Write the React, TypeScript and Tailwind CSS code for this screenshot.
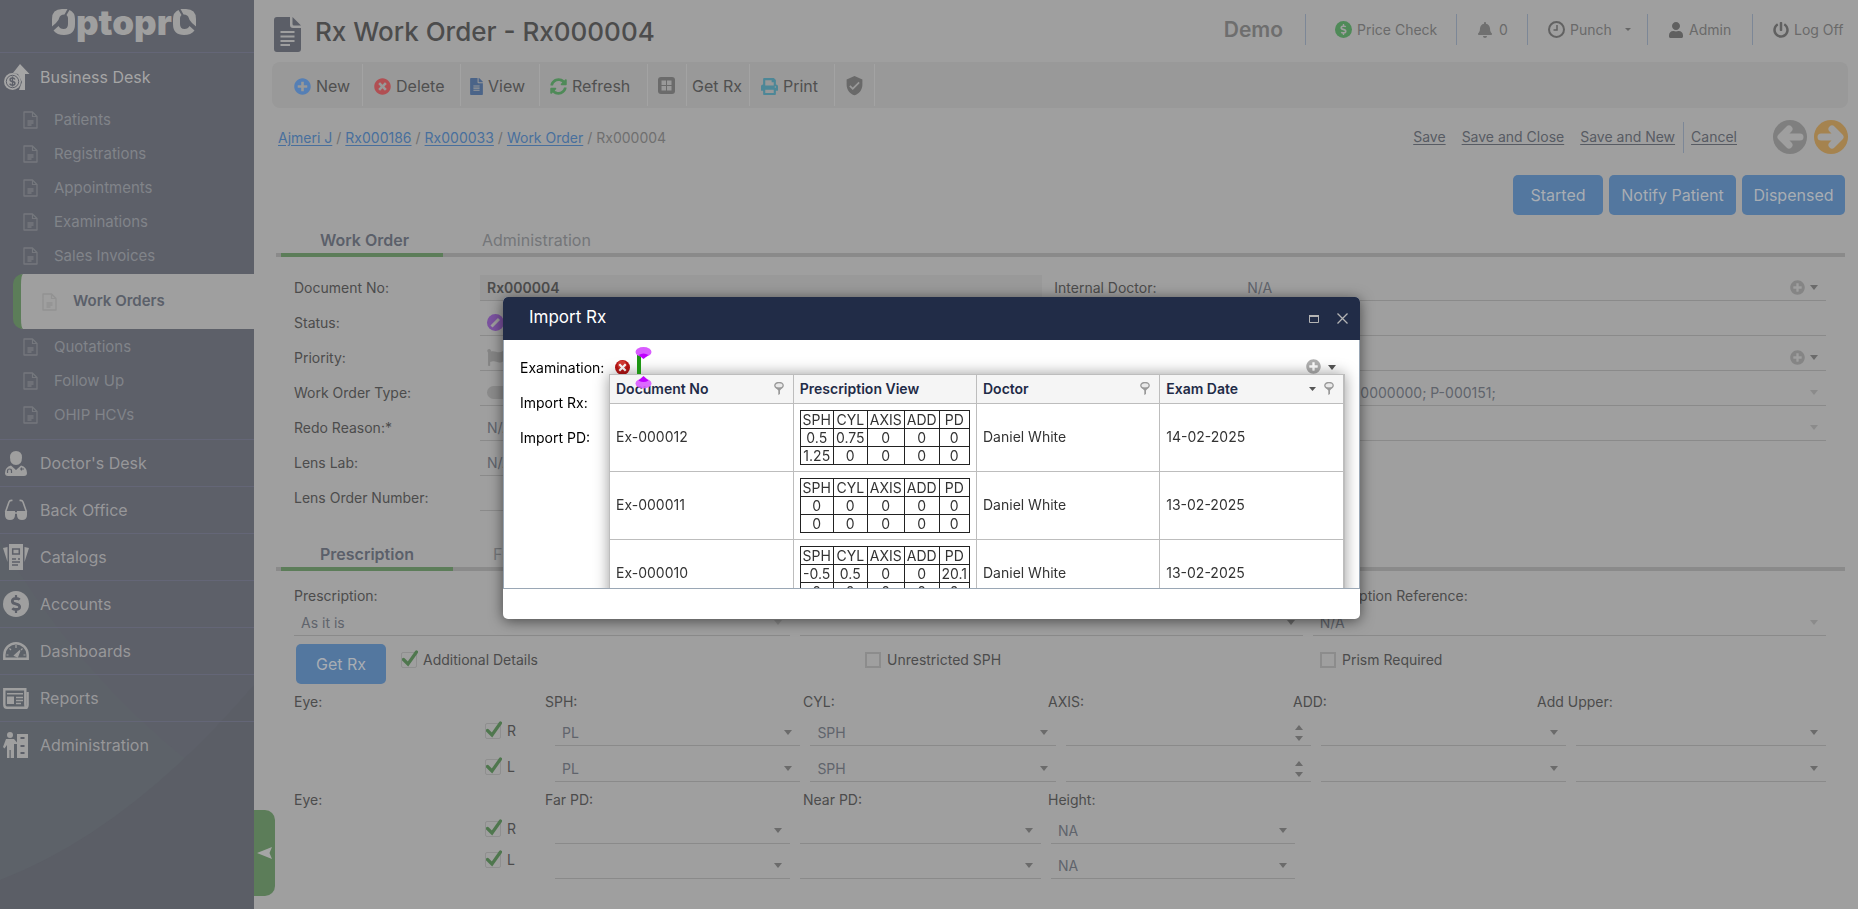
import React, { useId } from "react";
import {
  FaBell,
  FaDollarSign,
  FaFileAlt,
  FaFlag,
  FaPlusCircle,
  FaPowerOff,
  FaPrint,
  FaSyncAlt,
  FaTimesCircle,
  FaUser,
} from "react-icons/fa";
import { MdVerifiedUser } from "react-icons/md";

/* ---------- drawings ---------- */

function LogoRing({ flip }: { flip?: boolean }) {
  return (
    <svg width="23" height="26" viewBox="0 0 23 26" className={flip ? "-scale-x-100" : ""} fill="currentColor" aria-hidden="true">
      <path d="M0 17.500V10Q0 0 10 0H15.500L12.500 5.500Q8 5.500 7.200 9Q7 11 4 14z" />
      <path d="M17.500 1Q23 3.500 23 10V15Q23 26 12 26Q5 26 1.500 21.500L6.500 17Q8 20 11.500 20Q16 20 16 15V9Q16 7.500 14.500 6z" />
    </svg>
  );
}

function Logo() {
  return (
    <div className="flex items-center gap-px text-[#9f9f9f]" aria-label="Optopro">
      <LogoRing />
      <span className="text-[35px] leading-9 font-black">ptopr</span>
      <LogoRing flip />
    </div>
  );
}

function Caret({ className = "text-[#5f5f5f]" }: { className?: string }) {
  return (
    <svg width="8" height="5" viewBox="0 0 8 5" className={`shrink-0 ${className}`} aria-hidden="true">
      <path d="M0 0h8L4 5z" fill="currentColor" />
    </svg>
  );
}

function DocIcon() {
  return (
    <svg width="15" height="18" viewBox="0 0 15 18" fill="none" stroke="currentColor" aria-hidden="true">
      <path d="M1 1h8.500L14 5.500V17H1z" strokeWidth="1.300" strokeLinejoin="round" />
      <path d="M9.500 1v4.500H14" strokeWidth="1.200" />
      <path d="M4.500 10h6M4.500 12h6M4.500 14h4" strokeWidth="1.300" />
    </svg>
  );
}

function GrowthIcon() {
  return (
    <svg width="26" height="26" viewBox="0 0 26 26" aria-hidden="true">
      <path d="M16 0l9.500 10H21v16h-6l3-8-4-8-5-1z" fill="currentColor" />
      <circle cx="8.500" cy="17.500" r="8.500" fill="currentColor" />
      <circle cx="8.500" cy="17.500" r="6.200" fill="none" stroke="#5d6069" strokeWidth="1" />
      <path d="M11 15.500c-.5-1-1.300-1.500-2.500-1.500-3.200 0-3.200 3.200 0 3.500 3.200.3 3.200 3.700 0 3.700-1.300 0-2.300-.5-2.800-1.600M8.500 12.500v10" fill="none" stroke="#5d6069" strokeWidth="1.400" />
    </svg>
  );
}

function DoctorIcon() {
  return (
    <svg width="22" height="25" viewBox="0 0 22 25" fill="currentColor" aria-hidden="true">
      <path d="M11 0Q17 0 17 6.500Q17 14 11 14Q5 14 5 6.500Q5 0 11 0z" />
      <path d="M6 14.500L11 19L16 14.500Q22 16 22 22Q22 25 19 25H3Q0 25 0 22Q0 16 6 14.500z" />
      <path d="M2.500 22V20q0-2 2-2t2 2v2M16.500 16.500v3M15 18h4" fill="none" stroke="#5d6069" strokeWidth="1.200" />
    </svg>
  );
}

function GlassesIcon() {
  return (
    <svg width="24" height="22" viewBox="0 0 24 22" fill="none" stroke="currentColor" aria-hidden="true">
      <path d="M1.500 13L5 3q.8-2 3.500-1.500M22.500 13L19 3q-.8-2-3.500-1.500" strokeWidth="1.600" />
      <path d="M1 12h10v4q0 5-5 5t-5-5zM13 12h10v4q0 5-5 5t-5-5z" fill="currentColor" stroke="none" />
      <path d="M10 14h4" strokeWidth="1.500" />
    </svg>
  );
}

function CatalogIcon() {
  return (
    <svg width="26" height="26" viewBox="0 0 26 26" fill="currentColor" aria-hidden="true">
      <path d="M0 4l4.500-1V18zM26 4l-4.500-1V18z" />
      <path d="M6 0h14v26H6z" />
      <path d="M9.700 5h6.600v5H9.700zM9 15h4M9 18h8M9 21h6M15 15h2" fill="none" stroke="#5d6069" strokeWidth="1.500" />
    </svg>
  );
}

function CoinIcon() {
  return (
    <span className="flex h-[26px] w-[26px] items-center justify-center rounded-full bg-[#9f9f9f] text-[#5d6069]">
      <FaDollarSign size={18} />
    </span>
  );
}

function GaugeIcon() {
  return (
    <svg width="26" height="18" viewBox="0 0 26 18" fill="none" stroke="currentColor" aria-hidden="true">
      <path d="M1.300 16.700V13a11.700 11.700 0 0 1 23.400 0v3.700z" strokeWidth="2.500" />
      <path d="M13 3v3M6.500 6.500l1.500 1.500M19.500 6.500L18 8M3.500 13h2M22.500 13h-2" strokeWidth="1.200" />
      <path d="M11.500 13.500L17 8.500l-2.500 6.500z" fill="currentColor" strokeWidth="1.200" />
    </svg>
  );
}

function ReportIcon() {
  return (
    <svg width="26" height="21" viewBox="0 0 26 21" fill="none" stroke="currentColor" aria-hidden="true">
      <path d="M1.300 1.300h21v15q0 3.400 2 3.400H4q-2.700 0-2.700-3z" strokeWidth="2.400" />
      <path d="M24.600 4v13q0 2-1 2.700" strokeWidth="2.400" />
      <path d="M4 5.700h16M13 9.500h7M13 12.500h7M13 15.500h5" strokeWidth="1.600" />
      <path d="M4 8.500h7V16H4z" fill="currentColor" stroke="none" />
    </svg>
  );
}

function AdminIcon() {
  return (
    <svg width="26" height="26" viewBox="0 0 26 26" fill="currentColor" aria-hidden="true">
      <circle cx="7" cy="3" r="3" />
      <path d="M3 7h8l3 3.500V12h-3v14H7.700v-8H6.500v8H4V13l-2.500 3.500L0 15z" />
      <path d="M14 2h11v24H14z" />
      <path d="M17.500 6h4M17.500 14h4M17.500 21h4" stroke="#5d6069" strokeWidth="1.800" />
    </svg>
  );
}

function PinIcon() {
  return (
    <svg width="10" height="13" viewBox="0 0 10 13" aria-hidden="true" className="shrink-0">
      <ellipse cx="5" cy="3.500" rx="4.200" ry="3" fill="#e9e9e9" stroke="#999" strokeWidth="1.300" />
      <path d="M1.500 5.500h7L6 8.500V12L4.300 13V8.500z" fill="#999" />
    </svg>
  );
}

/* ---------- form controls ---------- */

type FieldProps = {
  id?: string;
  label: string;
  value?: string;
  faint?: boolean;
  add?: boolean;
};

function SelectField({ id, label, value = "", faint, add }: FieldProps) {
  return (
    <div className="relative flex h-[26px] min-w-0 items-center border-b border-[#8a8a8a]">
      <select id={id} aria-label={label} defaultValue={value} className="h-full w-full appearance-none bg-transparent pl-[7px] text-[#60646c] outline-none">
        <option value={value}>{value}</option>
      </select>
      <div className="pointer-events-none absolute right-[8px] flex items-center gap-[5px]">
        {add && <FaPlusCircle size={15} className="text-[#858585]" />}
        <Caret className={faint ? "text-[#8b8b8b]" : "text-[#6b6b6b]"} />
      </div>
    </div>
  );
}

function NumberField({ label }: { label: string }) {
  return (
    <div className="relative flex h-[26px] min-w-0 items-center border-b border-[#8a8a8a]">
      <input aria-label={label} className="h-full w-full bg-transparent pl-[7px] outline-none" />
      <div className="pointer-events-none absolute right-[8px] flex flex-col gap-[6px] text-[#6b6b6b]">
        <Caret className="rotate-180" />
        <Caret className="" />
      </div>
    </div>
  );
}

function Check({ label, checked, className = "" }: { label: string; checked?: boolean; className?: string }) {
  return (
    <label className={`flex items-center gap-[6px] text-[#4c4c4c] ${className}`}>
      <span className="relative flex h-4 w-4 shrink-0">
        <input
          type="checkbox"
          defaultChecked={checked}
          className="peer h-4 w-4 appearance-none border-2 border-[#8c8c8c] checked:rounded-xs checked:border checked:border-[#8f8f8f]"
        />
        <svg viewBox="0 0 16 17" className="pointer-events-none absolute -top-[2px] left-px hidden h-[17px] w-4 peer-checked:block" fill="none" stroke="#4f774e" strokeWidth="3.200" aria-hidden="true">
          <path d="M1.500 9.500l4.500 4.500L14.500 2" strokeLinecap="round" />
        </svg>
      </span>
      {label}
    </label>
  );
}

function Tabs({ items, width, gap }: { items: string[]; width: string; gap: string }) {
  return (
    <div role="tablist" className="mx-[22px] mr-[13px] flex h-[30px] border-b-4 border-[#8a8a8a] pl-[5px]">
      <button role="tab" aria-selected="true" className={`-mb-1 h-[30px] border-b-4 border-[#5c7d59] pl-[39px] text-left text-base leading-[25px] font-semibold whitespace-nowrap text-[#5b606a] ${width}`}>
        {items[0]}
      </button>
      <button role="tab" aria-selected="false" className={`text-base leading-[25px] text-[#747679] ${gap}`}>
        {items[1]}
      </button>
    </div>
  );
}

/* ---------- sidebar ---------- */

const subItems = ["Patients", "Registrations", "Appointments", "Examinations", "Sales Invoices"];
const subItemsAfter = ["Quotations", "Follow Up", "OHIP HCVs"];
const sections = [
  { name: "Doctor's Desk", icon: <DoctorIcon /> },
  { name: "Back Office", icon: <GlassesIcon /> },
  { name: "Catalogs", icon: <CatalogIcon /> },
  { name: "Accounts", icon: <CoinIcon /> },
  { name: "Dashboards", icon: <GaugeIcon /> },
  { name: "Reports", icon: <ReportIcon /> },
  { name: "Administration", icon: <AdminIcon /> },
];

function SubItem({ name }: { name: string }) {
  return (
    <a href="#" className="flex h-[34px] items-center gap-4 pl-[23px] text-[15px] text-[#818489]">
      <span className="text-[#75777d]">
        <DocIcon />
      </span>
      {name}
    </a>
  );
}

function Sidebar() {
  return (
    <aside className="relative w-[254px] shrink-0 bg-[#5d6069]">
      <svg className="absolute inset-x-0 bottom-0 h-[369px] w-full" viewBox="0 0 254 369" preserveAspectRatio="none" aria-hidden="true">
        <path d="M0 0Q90 160 254 270V369H0z" fill="#5d6269" />
        <path d="M0 340Q130 290 254 145V369H0z" fill="#5b5e66" />
      </svg>
      <div className="relative">
        <div className="flex h-[52px] items-start pt-[4px] pl-[52px]">
          <Logo />
        </div>
        <nav>
          <a href="#" className="flex h-12 items-center border-t border-[#646677] pl-1 text-base text-[#a5a5a5]">
            <span className="w-9">
              <GrowthIcon />
            </span>
            Business Desk
          </a>
          <div className="pt-[3px] pb-[7px]">
            {subItems.map((n) => (
              <SubItem key={n} name={n} />
            ))}
            <a href="#" aria-current="page" className="my-px ml-[13px] flex h-[55px] items-center gap-4 rounded-l-[10px] border-l-8 border-[#5c7d59] bg-[#9f9f9f] pl-[21px] text-[15px] font-semibold text-[#5b606a]">
              <span className="text-[#929292]">
                <DocIcon />
              </span>
              Work Orders
            </a>
            {subItemsAfter.map((n) => (
              <SubItem key={n} name={n} />
            ))}
          </div>
          {sections.map((s) => (
            <a key={s.name} href="#" className="flex h-[47px] items-center border-t border-[#646677] pl-[3px] text-base text-[#979799]">
              <span className="flex w-[26px] justify-center text-[#9f9f9f]">{s.icon}</span>
              <span className="pl-[11px]">{s.name}</span>
            </a>
          ))}
        </nav>
      </div>
      <button aria-label="Collapse menu" className="absolute bottom-[13px] left-full flex h-[86px] w-[21px] items-center justify-center rounded-r-[10px] bg-[#5c7d59]">
        <svg width="15" height="12" viewBox="0 0 15 12" aria-hidden="true">
          <path d="M0 6L15 0L12.500 6L15 12z" fill="#a5a5a5" />
        </svg>
      </button>
    </aside>
  );
}

/* ---------- page header ---------- */

function TopBar() {
  return (
    <header className="flex h-[62px] items-start">
      <div className="flex flex-1 items-center gap-[14px] pt-4 pl-5">
        <svg width="27" height="35" viewBox="0 0 27 35" aria-hidden="true">
          <path d="M3 0h13v8q0 3 3 3h8v21q0 3-3 3H3q-3 0-3-3V3q0-3 3-3z" fill="#5b5e67" />
          <path d="M18.500 0L27 8.500h-7q-1.500 0-1.500-1.500z" fill="#5b5e67" />
          <path d="M6.500 15h14M6.500 19.500h14M6.500 24h14M6.500 28h9.500" stroke="#9f9f9f" strokeWidth="2" />
        </svg>
        <h1 className="pb-1 text-[26px] leading-8 font-medium whitespace-nowrap text-[#4c4c4c]">Rx Work Order - Rx000004</h1>
      </div>
      <div className="flex items-center pt-[14px] text-sm whitespace-nowrap text-[#6a6a6a]">
        <span className="pr-[22px] text-[21px] leading-[31px] font-semibold text-[#6e6e6e]">Demo</span>
        <a href="#" className="flex h-[31px] w-[151px] items-center gap-[5px] border-l border-[#7c8797] pl-[29px]">
          <span className="flex h-[17px] w-[17px] items-center justify-center rounded-full bg-[#4f8a58] text-[#9f9f9f]">
            <FaDollarSign size={11} />
          </span>
          Price Check
        </a>
        <a href="#" className="flex h-[31px] w-[71px] items-center gap-[6px] border-l border-[#7c8797] pl-5">
          <FaBell size={16} className="text-[#707070]" />0
        </a>
        <a href="#" className="flex h-[31px] w-[120px] items-center gap-[5px] border-l border-[#7c8797] pl-5">
          <svg width="17" height="17" viewBox="0 0 17 17" fill="none" stroke="#626262" strokeWidth="2" aria-hidden="true">
            <circle cx="8.500" cy="8.500" r="7.500" />
            <path d="M9 4v5H5.500" strokeWidth="1.500" />
          </svg>
          Punch
          <svg width="6" height="3" viewBox="0 0 6 3" className="ml-2" aria-hidden="true">
            <path d="M0 0h6L3 3z" fill="#666" />
          </svg>
        </a>
        <a href="#" className="flex h-[31px] w-[105px] items-center gap-[5px] border-l border-[#7c8797] pl-5">
          <FaUser size={16} className="text-[#606060]" />
          Admin
        </a>
        <a href="#" className="flex h-[31px] w-[106px] items-center gap-[5px] border-l border-[#7c8797] pl-5">
          <FaPowerOff size={16} className="text-[#606060]" />
          Log Off
        </a>
      </div>
    </header>
  );
}

function Tool({ icon, label, width, pad = "pl-3" }: { icon?: React.ReactNode; label?: string; width: string; pad?: string }) {
  return (
    <button className={`flex h-[42px] items-center gap-[5px] border-r border-[#a3a3a3] pt-[2px] whitespace-nowrap ${pad} ${width}`} aria-label={label || "Tool"}>
      {icon}
      {label}
    </button>
  );
}

function Toolbar() {
  return (
    <div role="toolbar" className="mr-[10px] ml-[18px] flex h-[46px] items-center rounded-lg bg-[#999] pl-[10px] text-base text-[#505050]">
      <Tool width="w-[81px]" icon={<FaPlusCircle size={17} className="text-[#557fb5]" />} label="New" />
      <Tool width="w-[98px]" pad="pl-[11px]" icon={<FaTimesCircle size={17} className="text-[#b14f53]" />} label="Delete" />
      <Tool width="w-[79px]" pad="pl-[9px]" icon={<FaFileAlt size={17} className="w-[13px] text-[#4b6488]" />} label="View" />
      <Tool width="w-[108px]" pad="pl-[10px]" icon={<FaSyncAlt size={17} className="text-[#4f8a58]" />} label="Refresh" />
      <button aria-label="Layout" className="flex h-[42px] w-[39px] items-center border-r border-[#a3a3a3] pl-[10px]">
        <svg width="17" height="17" viewBox="0 0 17 17" aria-hidden="true">
          <rect width="17" height="17" rx="3" fill="#6b6b6b" />
          <path d="M3.500 3.500h4.500v4.500H3.500zM9 3.500h4.500v4.500H9zM3.500 9h4.500v4.500H3.500zM9 9h4.500v4.500H9z" fill="#999" />
        </svg>
      </button>
      <Tool width="w-[63px]" pad="pl-[5px]" label="Get Rx" />
      <Tool width="w-[85px]" pad="pl-[11px]" icon={<FaPrint size={17} className="text-[#4d8797]" />} label="Print" />
      <button aria-label="Verify" className="flex h-[42px] w-10 items-center border-r border-[#a3a3a3] pl-[9px]">
        <MdVerifiedUser size={21} className="text-[#696969]" />
      </button>
    </div>
  );
}

function RoundArrow({ color, flip, label }: { color: string; flip?: boolean; label: string }) {
  return (
    <button aria-label={label}>
      <svg width="34" height="34" viewBox="0 0 34 34" className={flip ? "rotate-180" : ""} aria-hidden="true">
        <circle cx="17" cy="17" r="17" className={color} />
        <path d="M8 17L16 9M8 17L16 25M9 17H27" fill="none" stroke="#9f9f9f" strokeWidth="7" strokeLinecap="round" strokeLinejoin="round" />
      </svg>
    </button>
  );
}

function Crumbs() {
  const links = ["Ajmeri J", "Rx000186", "Rx000033", "Work Order"];
  return (
    <div className="flex items-start pt-3 pr-[10px] pl-6 text-sm">
      <nav aria-label="Breadcrumb" className="flex flex-1 gap-1 pt-2 whitespace-nowrap text-[#6f6f6f]">
        {links.map((l) => (
          <React.Fragment key={l}>
            <a href="#" className="text-[#486f9d] underline underline-offset-2">
              {l}
            </a>
            <span>/</span>
          </React.Fragment>
        ))}
        <span>Rx000004</span>
      </nav>
      <div className="flex h-[34px] items-center whitespace-nowrap text-[#575b63]">
        <a href="#" className="underline underline-offset-2">Save</a>
        <a href="#" className="ml-4 underline underline-offset-2">Save and Close</a>
        <a href="#" className="ml-4 underline underline-offset-2">Save and New</a>
        <a href="#" className="ml-2 flex h-[31px] items-center border-l border-[#7c8797] pl-[7px] underline underline-offset-2">Cancel</a>
        <div className="ml-9 flex gap-[7px]">
          <RoundArrow color="fill-[#7f7f7f]" label="Previous" />
          <RoundArrow color="fill-[#a5834f]" flip label="Next" />
        </div>
      </div>
    </div>
  );
}

/* ---------- page body ---------- */

function Label({ htmlFor, children }: { htmlFor?: string; children: React.ReactNode }) {
  return (
    <label htmlFor={htmlFor} className="block leading-[26px] whitespace-nowrap text-[#4c4c4c]">
      {children}
    </label>
  );
}

function LinedInput({ id, value, icon, strong }: { id: string; value: string; icon?: React.ReactNode; strong?: boolean }) {
  return (
    <div className={`flex h-[26px] items-center border-b border-[#8a8a8a] pl-[7px] ${strong ? "bg-[#999]" : ""}`}>
      {icon}
      <input id={id} defaultValue={value} className={`w-full bg-transparent outline-none ${strong ? "font-semibold text-[#4c4c4c]" : "text-[#60646c]"}`} />
    </div>
  );
}

function OrderForm() {
  const u = useId();
  const id = (n: string) => `${u}-${n}`;
  return (
    <div className="mr-8 ml-10 grid auto-rows-[35px] grid-cols-[186px_minmax(0,24fr)_12px_186px_minmax(0,25fr)] items-end pt-[9px] text-sm">
      <Label htmlFor={id("doc")}>Document No:</Label>
      <LinedInput id={id("doc")} value="Rx000004" strong />
      <span />
      <Label htmlFor={id("internal")}>Internal Doctor:</Label>
      <SelectField id={id("internal")} label="Internal Doctor" value="N/A" add />

      <Label htmlFor={id("status")}>Status:</Label>
      <LinedInput
        id={id("status")}
        value=""
        icon={
          <svg width="17" height="17" viewBox="0 0 17 17" className="shrink-0" aria-hidden="true">
            <circle cx="8.500" cy="8.500" r="8.500" fill="#7b52a0" />
            <path d="M4.500 12.500L12 5" stroke="#9f9f9f" strokeWidth="3" />
          </svg>
        }
      />
      <span />
      <Label htmlFor={id("external")}>External Doctor:</Label>
      <LinedInput id={id("external")} value="" />

      <Label htmlFor={id("priority")}>Priority:</Label>
      <LinedInput id={id("priority")} value="" icon={<FaFlag size={17} className="shrink-0 text-[#858585]" />} />
      <span />
      <Label htmlFor={id("patient")}>Patient:</Label>
      <SelectField id={id("patient")} label="Patient" add />

      <Label htmlFor={id("type")}>Work Order Type:</Label>
      <LinedInput id={id("type")} value="" icon={<span className="h-[13px] w-6 shrink-0 rounded-full bg-[#8b8b8b]" />} />
      <span />
      <Label htmlFor={id("contact")}>Contact:</Label>
      <SelectField id={id("contact")} label="Contact" value="Ajmeri J; 000-000000000; P-000151;" faint />

      <Label htmlFor={id("redo")}>Redo Reason:*</Label>
      <LinedInput id={id("redo")} value="N/A" />
      <span />
      <Label htmlFor={id("invoice")}>Invoice:</Label>
      <SelectField id={id("invoice")} label="Invoice" faint />

      <Label htmlFor={id("lab")}>Lens Lab:</Label>
      <LinedInput id={id("lab")} value="N/A" />
      <span className="col-span-3" />

      <Label htmlFor={id("lens")}>Lens Order Number:</Label>
      <LinedInput id={id("lens")} value="" />
      <span className="col-span-3" />
    </div>
  );
}

function EyeGroup({ checkGap, cols, children }: { checkGap: string; cols: string; children: React.ReactNode }) {
  return (
    <div className="flex items-start">
      <div className={`flex w-[261px] shrink-0 flex-col pl-[191px] ${checkGap}`}>
        <Check label="R" checked className="h-[22px]" />
        <Check label="L" checked className="h-[22px]" />
      </div>
      <div className={`grid flex-1 gap-x-[10px] ${cols}`}>{children}</div>
    </div>
  );
}

const eyes = ["R", "L"];

function PrescriptionForm() {
  const u = useId();
  return (
    <div className="mr-8 ml-10 pt-[15px] text-sm text-[#4c4c4c]">
      <div className="grid grid-cols-[496fr_502fr_513fr] gap-[10px]">
        <div>
          <label htmlFor={`${u}-a`} className="block h-6">Prescription:</label>
          <SelectField id={`${u}-a`} label="Prescription" value="As it is" faint />
        </div>
        <div>
          <label htmlFor={`${u}-b`} className="block h-6">Prescription View:</label>
          <SelectField id={`${u}-b`} label="Prescription View" />
        </div>
        <div>
          <label htmlFor={`${u}-c`} className="block h-6">Prescription Reference:</label>
          <SelectField id={`${u}-c`} label="Prescription Reference" value="N/A" faint />
        </div>
      </div>
      <div className="grid grid-cols-[571fr_455fr_506fr] pt-2">
        <div className="flex gap-[15px] pl-[2px]">
          <button className="h-10 w-[90px] rounded-[5px] bg-[#53779f] text-base text-[#a8adb3]">Get Rx</button>
          <Check label="Additional Details" checked className="h-8" />
        </div>
        <Check label="Unrestricted SPH" className="h-8" />
        <Check label="Prism Required" className="h-8" />
      </div>

      <div className="grid h-9 grid-cols-[251px_258fr_245fr_245fr_244fr_289fr] items-center">
        <span>Eye:</span>
        <span>SPH:</span>
        <span>CYL:</span>
        <span>AXIS:</span>
        <span>ADD:</span>
        <span>Add Upper:</span>
      </div>
      <EyeGroup checkGap="gap-[14px]" cols="gap-y-[10px] grid-cols-[245fr_245fr_245fr_244fr_250fr]">
        {eyes.map((eye) => (
          <React.Fragment key={eye}>
            <SelectField label={`SPH ${eye}`} value="PL" />
            <SelectField label={`CYL ${eye}`} value="SPH" />
            <NumberField label={`AXIS ${eye}`} />
            <SelectField label={`ADD ${eye}`} />
            <SelectField label={`Add Upper ${eye}`} />
          </React.Fragment>
        ))}
      </EyeGroup>
      <div className="grid h-9 grid-cols-[251px_258fr_245fr_778fr] items-center">
        <span>Eye:</span>
        <span>Far PD:</span>
        <span>Near PD:</span>
        <span>Height:</span>
      </div>
      <EyeGroup checkGap="gap-[9px]" cols="gap-y-[9px] grid-cols-[235fr_241fr_244fr_521fr]">
        {eyes.map((eye) => (
          <React.Fragment key={eye}>
            <SelectField label={`Far PD ${eye}`} />
            <SelectField label={`Near PD ${eye}`} />
            <SelectField label={`Height ${eye}`} value="NA" />
            <span />
          </React.Fragment>
        ))}
      </EyeGroup>
    </div>
  );
}

/* ---------- import dialog ---------- */

const exams = [
  { no: "Ex-000012", date: "14-02-2025", rx: [["0.5", "0.75", "0", "0", "0"], ["1.25", "0", "0", "0", "0"]] },
  { no: "Ex-000011", date: "13-02-2025", rx: [["0", "0", "0", "0", "0"], ["0", "0", "0", "0", "0"]] },
  { no: "Ex-000010", date: "13-02-2025", rx: [["-0.5", "0.5", "0", "0", "20.1"], ["0", "0", "0", "0", "0"]] },
];

function RxTable({ rows }: { rows: string[][] }) {
  return (
    <table className="w-[169px] table-fixed border-collapse text-center leading-[17px]">
      <colgroup>
        <col className="w-[33px]" />
        <col className="w-[34px]" />
        <col className="w-[37px]" />
        <col className="w-[35px]" />
        <col className="w-[30px]" />
      </colgroup>
      <tbody>
        {[["SPH", "CYL", "AXIS", "ADD", "PD"], ...rows].map((r, i) => (
          <tr key={i} className="h-[18px]">
            {r.map((c, j) => (
              <td key={j} className="border border-[#222] p-0">
                <span className="-mx-1 block">{c}</span>
              </td>
            ))}
          </tr>
        ))}
      </tbody>
    </table>
  );
}

function ImportDialog() {
  const heads = ["Document No", "Prescription View", "Doctor", "Exam Date"];
  return (
    <div className="fixed inset-0 flex items-center justify-center pt-[7px] pl-[5px]">
      <section role="dialog" aria-label="Import Rx" className="w-[857px] overflow-hidden rounded-[5px] bg-white shadow-[0_2px_14px_rgba(0,0,0,0.55)]">
        <div className="flex h-[43px] items-center bg-[#212c47] pr-3 pl-[26px] text-white">
          <h2 className="flex-1 pb-1 text-[17px] leading-6">Import Rx</h2>
          <button aria-label="Maximize" className="mr-[18px]">
            <svg width="10" height="8" viewBox="0 0 10 8" className="block" aria-hidden="true">
              <path d="M.5 1H9.500V7.500H.5z" fill="none" stroke="#b4b4b4" />
              <path d="M0 1h10" stroke="#b4b4b4" strokeWidth="2" />
            </svg>
          </button>
          <button aria-label="Close">
            <svg width="11" height="11" viewBox="0 0 11 11" className="block" aria-hidden="true">
              <path d="M.5 .5l10 10M10.500 .5l-10 10" stroke="#b4b4b4" strokeWidth="1.300" />
            </svg>
          </button>
        </div>
        <div className="relative h-[249px] overflow-hidden border-x border-b border-[#9aa7b5] pt-[10px] pl-4 text-sm text-black">
          <div className="flex h-[35px] items-center">
            <label htmlFor="exam" className="w-[95px]">Examination:</label>
            <svg width="15" height="15" viewBox="0 0 15 15" className="shrink-0" aria-hidden="true">
              <circle cx="7.500" cy="7.500" r="7.500" fill="#b81414" />
              <circle cx="7" cy="5" r="4.500" fill="#d33a33" />
              <path d="M4.300 4.300l6.400 6.400M10.700 4.300l-6.400 6.400" stroke="#fff" strokeWidth="2.200" />
            </svg>
            <input id="exam" className="ml-2 min-w-0 flex-1 bg-transparent outline-none" />
            <FaPlusCircle size={15} className="mb-[2px] text-[#b0b0b0]" />
            <Caret className="mr-[23px] ml-[7px] text-[#555]" />
          </div>
          <div className="flex h-[35px] items-center">Import Rx:</div>
          <div className="flex h-[35px] items-center">Import PD:</div>

          <div className="absolute top-[34px] left-[105px] w-[736px] border border-r-2 border-[#bdbdbd] bg-white shadow-[0_0_14px_rgba(0,0,0,0.4)]">
            <table className="w-full table-fixed border-collapse text-[#333]">
              <thead>
                <tr className="h-7 bg-[#f5f5f5] text-[#1f2b47]">
                  {heads.map((h) => (
                    <th key={h} className="border-r border-b border-[#bdbdbd] p-0 pr-[9px] pl-[6px] text-left font-semibold last:border-r-0">
                      <div className="flex items-center gap-2 whitespace-nowrap">
                        <span className="flex-1">{h}</span>
                        {h === "Exam Date" && (
                          <svg width="7" height="4" viewBox="0 0 7 4" aria-hidden="true">
                            <path d="M0 0h7L3.500 4z" fill="#555" />
                          </svg>
                        )}
                        {h !== "Prescription View" && <PinIcon />}
                      </div>
                    </th>
                  ))}
                </tr>
              </thead>
              <tbody>
                {exams.map((e) => (
                  <tr key={e.no} className="h-[68px]">
                    <td className="border-r border-b border-[#bdbdbd] py-0 pl-[6px]">{e.no}</td>
                    <td className="border-r border-b border-[#bdbdbd] py-0 pl-[6px]">
                      <RxTable rows={e.rx} />
                    </td>
                    <td className="border-r border-b border-[#bdbdbd] py-0 pl-[6px]">Daniel White</td>
                    <td className="border-b border-[#bdbdbd] py-0 pl-[6px]">{e.date}</td>
                  </tr>
                ))}
              </tbody>
            </table>
          </div>

          <svg width="17" height="42" viewBox="0 0 17 42" className="absolute top-[7px] left-[131px]" aria-hidden="true">
            <path d="M2 8h4v19H2z" fill="#1e9614" />
            <ellipse cx="8.500" cy="5" rx="8" ry="5" fill="#d95cff" />
            <path d="M3.500 8q5-3 10 0L8.500 12z" fill="#bf00ff" />
            <ellipse cx="8.500" cy="36.500" rx="8" ry="5" fill="#d95cff" fillOpacity="0.9" />
            <path d="M3.500 33.500q5 3 10 0L8.500 29z" fill="#bf00ff" />
          </svg>
        </div>
        <div className="h-[30px]" />
      </section>
    </div>
  );
}

export default function App() {
  return (
    <div className="flex min-h-screen bg-[#9f9f9f] font-[Inter,Roboto,sans-serif]">
      <Sidebar />
      <main className="min-w-0 flex-1">
        <TopBar />
        <Toolbar />
        <Crumbs />
        <div className="flex justify-end gap-[6px] pt-[21px] pr-[13px] pb-3 text-base text-[#a8adb3]">
          <button className="h-10 w-[90px] rounded-[5px] bg-[#53779f]">Started</button>
          <button className="h-10 w-[127px] rounded-[5px] bg-[#53779f]">Notify Patient</button>
          <button className="h-10 w-[103px] rounded-[5px] bg-[#53779f]">Dispensed</button>
        </div>
        <Tabs items={["Work Order", "Administration"]} width="w-[162px]" gap="ml-[39px]" />
        <OrderForm />
        <div className="pt-[30px]">
          <Tabs items={["Prescription", "Frame"]} width="w-[172px]" gap="ml-10" />
        </div>
        <PrescriptionForm />
      </main>
      <ImportDialog />
    </div>
  );
}
